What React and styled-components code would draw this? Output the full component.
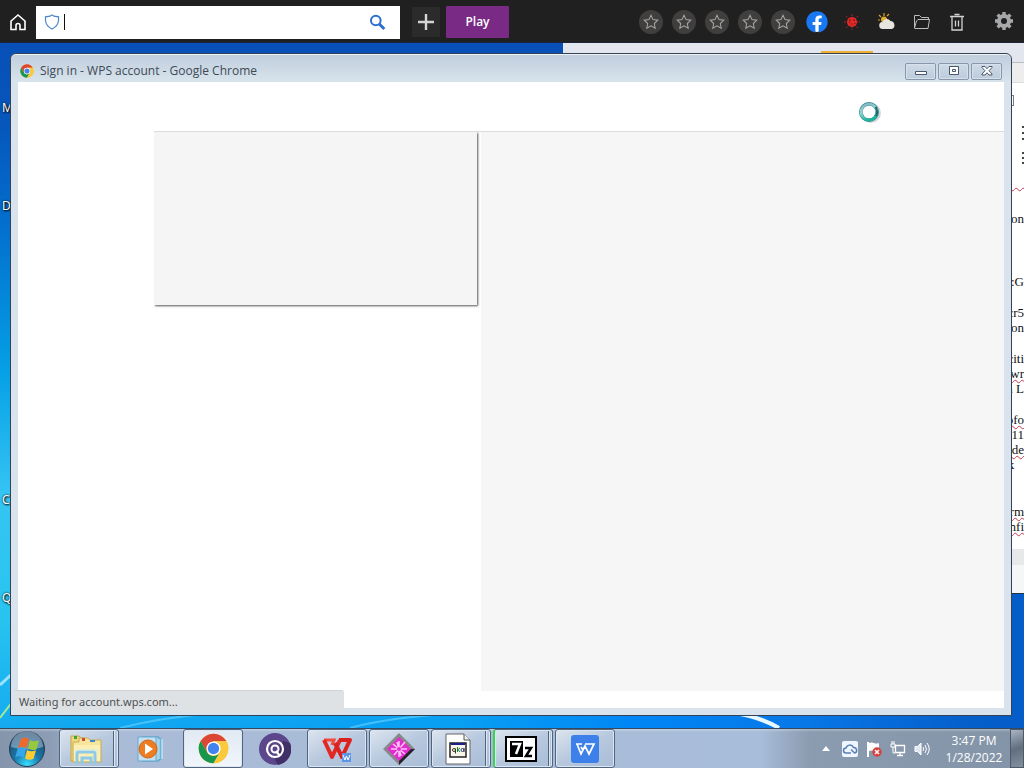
import React from 'react';
import styled, { createGlobalStyle, css } from 'styled-components';
import { FaFacebook } from 'react-icons/fa';

const ui = '"Noto Sans", "Open Sans", sans-serif';

const GlobalStyle = createGlobalStyle`
  *, *::before, *::after { box-sizing: border-box; }
  body { margin: 0; font-family: ${ui}; font-size: 12px; overflow: hidden; }
  button, input { font: inherit; padding: 0; border: 0; background: none; }
  svg { display: block; flex: none; }
  ul { list-style: none; margin: 0; padding: 0; }
`;

const Screen = styled.div`
  display: grid;
  grid-template-rows: 43px 1fr 40px;
  min-height: 100vh;
`;

/* ---------- Toolbar ---------- */
const Toolbar = styled.header`
  display: flex;
  align-items: center;
  background: #202020;
  border-bottom: 1px solid #19233a;
`;
const HomeButton = styled.button`
  display: grid;
  place-items: center;
  width: 36px;
  height: 33px;
  margin-top: 2px;
`;
const AddressBar = styled.form`
  display: flex;
  align-items: center;
  flex: 0 1 364px;
  height: 33px;
  margin-top: 2px;
  padding: 0 14px 0 8px;
  background: #fff;
`;
const AddressInput = styled.input`
  flex: 1;
  min-width: 0;
  height: 16px;
  margin-left: 4px;
  border-left: 1px solid #111;
  outline: none;
`;
const AddButton = styled.button`
  display: grid;
  place-items: center;
  width: 28px;
  height: 30px;
  margin: 2px 6px 0 12px;
  background: #2b2b2b;
`;
const PlayButton = styled.button`
  width: 63px;
  height: 32px;
  margin-top: 2px;
  border-radius: 1px;
  background: #782a85;
  color: #fff;
  font: 600 12px/16px "Open Sans", ${ui};
`;
const Shortcuts = styled.nav`
  display: flex;
  align-items: center;
  gap: 9px;
  margin: 2px 21px 0 auto;
`;
const StarButton = styled.button`
  display: grid;
  place-items: center;
  width: 24px;
  height: 24px;
  border-radius: 50%;
  background: #403f3e;
`;
const ToolButton = styled.button`
  display: grid;
  place-items: center;
  width: 26px;
  height: 26px;
  color: #1877f2;
`;
const SettingsButton = styled(ToolButton)`
  margin-right: 7px;
`;

/* ---------- Desktop ---------- */
const Desktop = styled.main`
  position: relative;
  overflow: hidden;
  background:
    linear-gradient(90deg, transparent 0%, rgba(0, 150, 245, 0.6) 45%, #0086f6 62%, #0878e8 78%, #0560cc 94%, #045cc8 100%) 0 100% / 100% 92% no-repeat,
    linear-gradient(180deg, #0850b8 0%, #0656bc 12%, #0372cf 28%, #05a0e6 48%, #35c5f3 66%, #28c4ef 84%, #14aaf0 100%);
`;
const Streaks = styled.svg`
  position: absolute;
  inset: 0;
  width: 100%;
  height: 100%;
`;
const ShortcutGrid = styled.ul`
  position: absolute;
  left: 2px;
  top: 0;
  width: 80px;
  color: #fff;
  text-shadow: 1px 1px 2px #000, 0 0 2px #000;
`;
const Shortcut = styled.li`
  display: flex;
  align-items: flex-end;
  height: 98px;
  line-height: 16px;
  &:first-child { height: 73px; }
`;

/* ---------- Document window ---------- */
const DocWindow = styled.section`
  position: absolute;
  top: 0;
  left: 55%;
  right: 0;
  bottom: 134px;
  display: flex;
  flex-direction: column;
  background: #fff;
  border-bottom: 1px solid #234;
  overflow: hidden;
`;
const DocTabs = styled.div`
  display: flex;
  height: 20px;
  flex: none;
  padding-right: 151px;
  border-bottom: 1px solid #b9bdc6;
  background: #e3e6ee;
`;
const DocTab = styled.span`
  width: 52px;
  height: 3px;
  margin: 8px 0 0 auto;
  background: #eeaf35;
`;
const DocRibbon = styled.div`
  height: 20px;
  flex: none;
  background: #ededed;
  border-bottom: 1px solid #dcdcdc;
`;
const DocTools = styled.div`
  display: flex;
  flex-direction: column;
  align-items: flex-end;
  height: 91px;
  flex: none;
  padding-top: 12px;
`;
const DocToggle = styled.span`
  width: 10px;
  height: 11px;
  margin-right: 10px;
  border: 1px solid #777c85;
`;
const DocDots = styled.svg`
  margin-top: 20px;
`;
const DocText = styled.div`
  flex: 1;
  width: 16px;
  margin-left: auto;
  min-height: 0;
  white-space: nowrap;
  color: #111;
  font: 13px/15px "Liberation Serif", serif;
`;
const Line = styled.p`
  display: flex;
  justify-content: flex-end;
  margin: 0;
  height: ${p => (p.$blank ? 16 : 15)}px;
  ${p => p.$wavy && css`text-decoration: underline wavy #c63b52 1px;`}
`;
const MarkedLine = styled(Line)`
  margin-bottom: 6px;
`;
const DocScroll = styled.div`
  height: 16px;
  flex: none;
  background: #e6e8e9;
`;
const DocStatus = styled.div`
  height: 28px;
  flex: none;
  background: #f5f6f7;
`;

/* ---------- Chrome window ---------- */
const Popup = styled.section`
  position: absolute;
  inset: 10px 12px 12px 10px;
  display: flex;
  flex-direction: column;
  padding: 0 7px;
  padding-bottom: 7px;
  border: 1px solid #344354;
  border-radius: 6px 6px 0 0;
  background: #d9e3ed;
  box-shadow: inset 0 1px 0 #eef3f8;
`;
const TitleBar = styled.header`
  display: flex;
  align-items: center;
  height: 27px;
  flex: none;
  margin: 1px -7px 0;
  padding: 5px 9px 0;
  border-radius: 5px 5px 0 0;
  background: linear-gradient(180deg, #c0cedd, #d8e4ec);
`;
const Title = styled.h1`
  flex: 1;
  margin: 0 0 0 6px;
  color: #3c4957;
  font: 400 12px/18px "Open Sans", ${ui};
`;
const Controls = styled.div`
  display: flex;
  gap: 2px;
`;
const ControlButton = styled.button`
  display: grid;
  place-items: center;
  width: 31px;
  height: 17px;
  border: 1px solid #8798ac;
  border-radius: 2px;
  background: linear-gradient(180deg, #cfdae6, #bccbdb);
  box-shadow: inset 0 0 0 1px #d6e1ec;
`;
const Page = styled.div`
  display: flex;
  flex: 1;
  flex-direction: column;
  background: #fff;
`;
const PageHeader = styled.div`
  height: 50px;
  flex: none;
  margin-left: 136px;
  border-bottom: 1px solid #dcdcdc;
`;
const PageBody = styled.div`
  display: flex;
  flex: 1;
  gap: 4px;
  padding: 0 0 17px 136px;
`;
const Card = styled.div`
  flex: 21 1 0;
  height: 173px;
  background: #f5f5f5;
  box-shadow: 1px 1px 2px #555;
  clip-path: inset(0 -4px -4px 0);
`;
const SidePanel = styled.div`
  flex: 34 1 0;
  background: #f6f6f6;
`;
const LoadStatus = styled.div`
  position: absolute;
  left: 4px;
  bottom: 2px;
  width: 329px;
  height: 23px;
  padding: 0 4px;
  border-top: 1px solid #cfd3d6;
  border-radius: 0 3px 0 0;
  background: #dfe2e4;
  color: #4c5055;
  font: 11px/22px ${ui};
`;
const BusyCursor = styled.svg`
  position: absolute;
  right: 128px;
  top: 46px;
`;

/* ---------- Taskbar ---------- */
const Taskbar = styled.footer`
  display: flex;
  align-items: center;
  border-top: 1px solid #34495f;
  background:
    linear-gradient(180deg, rgba(255, 255, 255, 0.3), transparent 3px),
    linear-gradient(90deg, #8595ab 0, #8c9db5 50px, #a9bbd6 110px, #a8bdd9 760px, #8b9bb0 810px, #8494a8 100%);
`;
const StartButton = styled.button`
  display: grid;
  place-items: center;
  width: 54px;
  height: 39px;
`;
const TaskList = styled.div`
  display: flex;
  gap: 2px;
  margin-left: 5px;
`;
const TaskButton = styled.button`
  display: grid;
  place-items: center;
  width: 60px;
  height: 39px;
  border-radius: 3px;
  ${p => p.$open && css`
    border: 1px solid #51657d;
    background: linear-gradient(150deg, #dde5ef, #b7c8de 50%, #a9bdd7);
    box-shadow: inset 0 0 0 1px #dbe6f2;
  `}
  ${p => p.$active && css`background: linear-gradient(180deg, #e1e9f2, #f1f6fb);`}
  ${p => p.$stacked && css`
    padding-right: 6px;
    background: linear-gradient(90deg, transparent 53px, #51657d 53px 54px, #dbe6f2 54px 55px, transparent 55px),
      linear-gradient(150deg, #dde5ef, #b7c8de 50%, #a9bdd7);
  `}
  ${p => p.$alert && css`border-left: 2px solid #36d84b;`}
`;
const Tray = styled.div`
  display: flex;
  align-items: center;
  gap: 8px;
  margin-left: auto;
`;
const TrayEnd = styled.div`
  display: flex;
  align-items: center;
`;
const Clock = styled.time`
  width: 72px;
  color: #fff;
  text-align: center;
  font: 12px/17px "Open Sans", ${ui};
`;
const TrayButton = styled.button`
  display: grid;
  place-items: center;
  width: 16px;
  height: 20px;
`;
const ShowDesktop = styled.button`
  width: 14px;
  height: 39px;
  border: 1px solid #4b5969;
  background: linear-gradient(160deg, #a9b5c2, #616e7e 50%, #8290a0);
`;

/* ---------- Drawings ---------- */
const starPath = 'M12 3l2.7 5.8 6.3.8-4.6 4.4 1.2 6.3L12 17.2l-5.6 3.1 1.2-6.3L3 9.6l6.3-.8z';

const ChromeLogo = ({ size }) => (
  <svg width={size} height={size} viewBox="0 0 48 48">
    <circle cx="24" cy="24" r="23" fill="#fbc93d" />
    <path d="M4.1 12.5A23 23 0 0 1 43.9 12.5H24L14 29.8z" fill="#dc4637" />
    <path d="M4.1 12.5A23 23 0 0 0 24 47l10-17.2a11.5 11.5 0 0 1-20 0z" fill="#17964f" />
    <path d="M43.9 12.5H24a11.5 11.5 0 0 1 10 17.3L24 47a23 23 0 0 0 19.9-34.5z" fill="#fbc93d" />
    <circle cx="24" cy="24" r="11" fill="#fff" />
    <circle cx="24" cy="24" r="8.8" fill="#4383ed" />
  </svg>
);

const StartOrb = () => (
  <svg width="38" height="38" viewBox="0 0 38 38">
    <defs>
      <radialGradient id="orb" cx="50%" cy="95%" r="85%">
        <stop offset="0" stopColor="#3be0ff" /><stop offset=".45" stopColor="#1779ab" /><stop offset="1" stopColor="#25496d" />
      </radialGradient>
    </defs>
    <circle cx="19" cy="19" r="17.5" fill="url(#orb)" stroke="#253a50" />
    <path d="M3 17a16 16 0 0 1 32 0q-16 5-32 0z" fill="#c5dae8" opacity=".45" />
    <path d="M13 9q4-3 8 .3l-2.500 9q-4-2.800-8.500-.4z" fill="#ee6a2c" />
    <path d="M22 10q4 2.500 9 .2l-2.500 9q-4 2-8.500-.6z" fill="#96c93d" />
    <path d="M9.500 19q4-2.500 8.500.2l-2.300 8.500q-4-2.700-8.500-.3z" fill="#37a6e8" />
    <path d="M19 20q4 2.500 9 .3l-2.500 8.500q-4 2.300-8.500-.4z" fill="#fecb34" />
  </svg>
);

const ExplorerIcon = () => (
  <svg width="34" height="32" viewBox="0 0 34 32">
    <path d="M2 3h8l2 2h4v23H2z" fill="#f0d77c" stroke="#c4a64c" />
    <path d="M10 5h9l2 2h11v22H4V9h6z" fill="#f6e59b" stroke="#c9ae56" />
    <path d="M5 12h26v16H5z" fill="#fbefb3" />
    <path d="M5 3h3v3H5z" fill="#36a845" /><path d="M13 5h3v3h-3z" fill="#d1483a" /><path d="M21 7h5v2h-5z" fill="#3e87ce" />
    <path d="M8 31V21q0-2 2-2h14q2 0 2 2v10M13 31v-6h9v6" fill="none" stroke="#8fc9e8" strokeWidth="3" />
    <path d="M6 20q0-3 3-3h17q3 0 3 3" fill="none" stroke="#c8e9f8" />
  </svg>
);

const MediaIcon = () => (
  <svg width="30" height="28" viewBox="0 0 30 28">
    <path d="M10 3h16v22H10z" fill="#6bb5d8" /><path d="M6 2h17v24H6z" fill="#a5d4ea" stroke="#4e9cc5" />
    <path d="M2 2h18v24H2z" fill="#c4e0f1" stroke="#67a9ce" />
    <path d="M23 4v20M26 4v20" stroke="#dff3fc" />
    <circle cx="12" cy="14" r="9" fill="#ee7d22" stroke="#cf6518" /><path d="M9 8.500l8 5.500-8 5.500z" fill="#fff" />
  </svg>
);

const ChatIcon = () => (
  <svg width="32" height="32" viewBox="0 0 32 32">
    <circle cx="16" cy="16" r="16" fill="#5c478c" />
    <path d="M24 8l7 2a16 16 0 0 1-12 22l-3-5z" fill="#413067" />
    <circle cx="16" cy="16" r="8" fill="none" stroke="#fff" strokeWidth="2.200" />
    <circle cx="16" cy="16" r="3.500" fill="none" stroke="#fff" strokeWidth="2" />
    <path d="M17 18l4 5" stroke="#fff" strokeWidth="2.200" />
  </svg>
);

const WriterIcon = () => (
  <svg width="32" height="28" viewBox="0 0 32 28">
    <path d="M3 5h10l-2 5" fill="none" stroke="#f2493c" strokeWidth="3" />
    <path d="M3 5l8 17 8-17" fill="none" stroke="#e32823" strokeWidth="4" strokeLinejoin="round" />
    <path d="M14 8l7 14 8-17H18" fill="none" stroke="#dd211f" strokeWidth="4" strokeLinejoin="round" />
    <path d="M21 18h9v9h-9z" fill="#5b95e8" /><path d="M22 20l2 5 1.500-4 1.500 4 2-5" fill="none" stroke="#fff" />
  </svg>
);

const DiamondIcon = () => (
  <svg width="32" height="32" viewBox="0 0 32 32">
    <path d="M16 0l16 16-16 16L0 16z" fill="#888" />
    <path d="M32 16L16 32v-5l11-11z" fill="#25222b" />
    <path d="M16 4l12 12-12 12L4 16z" fill="#e32bd2" />
    <path d="M16 8v16M8 16h16M10 11l12 10M11 22l11-13M14 9l4 14" stroke="#ffc5f7" strokeWidth="1.500" />
    <circle cx="16" cy="16" r="2" fill="#e32bd2" />
  </svg>
);

const ScriptIcon = () => (
  <svg width="26" height="32" viewBox="0 0 26 32">
    <path d="M1 1h18l6 6v24H1z" fill="#fff" stroke="#666" /><path d="M19 1v6h6" fill="#eee" stroke="#555" />
    <path d="M5 10h16v14H5z" fill="#f8f5e8" stroke="#222" strokeWidth="1.500" /><path d="M6 10h14v2H6z" fill="#1d2088" />
    <circle cx="9" cy="17" r="1.500" fill="none" stroke="#4b3920" />
    <path d="M12.500 14v5M12.500 17l2.500-2M13 16.500l2 2.500" stroke="#148026" /><circle cx="17.500" cy="17" r="1.500" fill="none" stroke="#253b9b" />
    <path d="M10.500 15.500v5M19 15v4" stroke="#333" />
  </svg>
);

const ArchiveIcon = () => (
  <svg width="32" height="26" viewBox="0 0 32 26">
    <path d="M1 1h30v24H1z" fill="#fff" stroke="#000" strokeWidth="2" /><path d="M5 5h13v16H5z" />
    <path d="M7 8h8l-4 10" fill="none" stroke="#fff" strokeWidth="2.500" />
    <path d="M20 12h6l-5 8h6" fill="none" stroke="#000" strokeWidth="2.500" />
  </svg>
);

const OfficeIcon = () => (
  <svg width="28" height="28" viewBox="0 0 28 28">
    <rect width="28" height="28" rx="3" fill="#3d80e9" />
    <path d="M5 9h6M6 9l4 10 4-8 4 8 5-10h-9M10 12l2 3" fill="none" stroke="#fff" strokeWidth="1.700" />
  </svg>
);

const tasks = [
  { name: 'File Explorer', Icon: ExplorerIcon, open: true, stacked: true },
  { name: 'Media Player', Icon: MediaIcon },
  { name: 'Google Chrome', Icon: () => <ChromeLogo size={31} />, open: true, active: true },
  { name: 'Chat', Icon: ChatIcon },
  { name: 'Writer', Icon: WriterIcon, open: true },
  { name: 'Tools', Icon: DiamondIcon, open: true },
  { name: 'Script', Icon: ScriptIcon, open: true, stacked: true },
  { name: '7-Zip', Icon: ArchiveIcon, open: true, stacked: true, alert: true },
  { name: 'WPS Office', Icon: OfficeIcon, open: true },
];

const shortcuts = ['M', 'D', '', '', 'C', 'Q'];

const lines = [
  ['on'], null, null, null, [':G'], null, ['cr5'], ['on'], null,
  ['citi'], ['wr', true], ['n L'], null, ['ofo', true], ['11'], ['de', true], ['k\u00a0\u00a0\u00a0'],
  null, null, ['rm', true], ['nfi', true],
];

export default function App() {
  return (
    <Screen>
      <GlobalStyle />
      <Toolbar>
        <HomeButton aria-label="Home">
          <svg width="18" height="18" viewBox="0 0 18 18" fill="none" stroke="#fff" strokeWidth="1.600">
            <path d="M1.500 8.500L9 2l7.500 6.500M2 8v8.500h5v-4a2 2 0 0 1 4 0v4h5V8" />
          </svg>
        </HomeButton>
        <AddressBar onSubmit={e => e.preventDefault()}>
          <svg width="16" height="16" viewBox="0 0 16 16" fill="none" stroke="#4a86c8" strokeWidth="1.200">
            <path d="M8 1l2 1.200 4.500.6v4Q14 12 8 15 2 12 1.500 6.800v-4L6 2.200z" />
          </svg>
          <AddressInput aria-label="Address" />
          <svg width="17" height="17" viewBox="0 0 17 17" fill="none" stroke="#2c70cf" strokeWidth="2">
            <circle cx="6.800" cy="6.500" r="4.800" /><path d="M10.300 10l5 5" strokeWidth="3" />
          </svg>
        </AddressBar>
        <AddButton aria-label="New tab">
          <svg width="16" height="16" viewBox="0 0 16 16" stroke="#d4d4d4" strokeWidth="2.400"><path d="M8 0v16M0 8h16" /></svg>
        </AddButton>
        <PlayButton>Play</PlayButton>
        <Shortcuts aria-label="Shortcuts">
          {[1, 2, 3, 4, 5].map(n => (
            <StarButton key={n} aria-label={`Favourite ${n}`}>
              <svg width="18" height="18" viewBox="0 0 24 24" fill="none" stroke="#a5a5a5" strokeWidth="1.400"><path d={starPath} /></svg>
            </StarButton>
          ))}
          <ToolButton aria-label="Facebook">
            <svg width="22" height="22" viewBox="0 0 22 22"><circle cx="11" cy="11" r="10" fill="#fff" /><FaFacebook size={22} /></svg>
          </ToolButton>
          <ToolButton aria-label="Virus news">
            <svg width="18" height="18" viewBox="0 0 18 18">
              <path d="M9 1v16M1 9h16M3 3l12 12M15 3L3 15" stroke="#a92622" strokeDasharray="2 1" />
              <circle cx="9" cy="9" r="5" fill="#df2929" />
              <path d="M7 6v2M11 6v2M8 11h1M12 10v1M6 9h1" stroke="#651212" />
            </svg>
          </ToolButton>
          <ToolButton aria-label="Weather">
            <svg width="18" height="18" viewBox="0 0 18 18">
              <path d="M6 0v3M1 2l2 2M11 1L9 3M0 7h2" stroke="#d5a52c" strokeWidth="1.200" />
              <circle cx="6" cy="6.500" r="3" fill="#e0ad2b" />
              <path d="M5 16a3.500 3.500 0 0 1-.5-7 4.500 4.500 0 0 1 8-1 4.200 4.200 0 0 1 1.500 8z" fill="#e7e5dd" />
            </svg>
          </ToolButton>
          <ToolButton aria-label="Folder">
            <svg width="18" height="16" viewBox="0 0 18 16" fill="none" stroke="#bcbcbc">
              <path d="M1.500 14V1.500h5l2 2h7v2M1.500 14.500H15l1.500-9H5L3.500 7 1.500 14" />
            </svg>
          </ToolButton>
          <ToolButton aria-label="Trash">
            <svg width="16" height="18" viewBox="0 0 16 18" fill="none" stroke="#d2d2d2" strokeWidth="1.300">
              <path d="M1 3.500h14M5.500 1.500h5M3 4v13h10V4M6.500 7.500v6M9.500 7.500v6" />
            </svg>
          </ToolButton>
        </Shortcuts>
        <SettingsButton aria-label="Settings">
          <svg width="20" height="20" viewBox="0 0 20 20" fill="none" stroke="#a7a8aa">
            <circle cx="10" cy="10" r="5" strokeWidth="4" />
            <path d="M10 1v3M10 16v3M1 10h3M16 10h3M3.600 3.600l2.200 2.200M14.200 14.200l2.200 2.200M16.400 3.600l-2.200 2.200M5.800 14.200l-2.200 2.200" strokeWidth="3.400" />
          </svg>
        </SettingsButton>
      </Toolbar>

      <Desktop>
        <Streaks viewBox="0 0 1024 685" preserveAspectRatio="none" fill="none" aria-hidden="true">
          <path d="M0 642L13 630" stroke="#9ce3ff" strokeWidth="3" />
          <path d="M0 675L13 658" stroke="#9deb9b" strokeWidth="2" />
          <path d="M120 685Q160 675 205 671M350 685Q390 674 450 671" stroke="#6bd3ff" strokeWidth="2" opacity=".6" />
          <path d="M735 670Q760 674 779 685" stroke="#e8f8ff" strokeWidth="4" />
        </Streaks>
        <ShortcutGrid>
          {shortcuts.map((label, i) => <Shortcut key={i}>{label}</Shortcut>)}
        </ShortcutGrid>

        <DocWindow>
          <DocTabs><DocTab /></DocTabs>
          <DocRibbon />
          <DocTools>
            <DocToggle />
            <DocDots width="2" height="40" viewBox="0 0 2 40" stroke="#444" strokeWidth="2">
              <path d="M1 0v2M1 6v2M1 12v2M1 26v2M1 31v2M1 36v2" />
            </DocDots>
          </DocTools>
          <DocText>
            <MarkedLine $wavy>&nbsp;&nbsp;&nbsp;&nbsp;</MarkedLine>
            <Line $blank />
            {lines.map((line, i) => line
              ? <Line key={i} $wavy={line[1]}>{line[0]}</Line>
              : <Line key={i} $blank />)}
          </DocText>
          <DocScroll />
          <DocStatus />
        </DocWindow>

        <Popup>
          <TitleBar>
            <ChromeLogo size={14} />
            <Title>Sign in - WPS account - Google Chrome</Title>
            <Controls>
              <ControlButton aria-label="Minimize">
                <svg width="12" height="10" viewBox="0 0 12 10" fill="#fff" stroke="#48566b"><path d="M.5 5.500h11v3H.5z" /></svg>
              </ControlButton>
              <ControlButton aria-label="Maximize">
                <svg width="12" height="10" viewBox="0 0 12 10" fill="#fff" stroke="#48566b"><path d="M1.500.5h9v8h-9zM4.500 3.500h3v2h-3z" /></svg>
              </ControlButton>
              <ControlButton aria-label="Close">
                <svg width="12" height="10" viewBox="0 0 12 10" fill="#fff" stroke="#48566b">
                  <path d="M1 .5h3l2 2.200L8 .5h3v1L8 4.700l3 3.300v1H8L6 6.800 4 9H1V8l3-3.300L1 1.500z" />
                </svg>
              </ControlButton>
            </Controls>
          </TitleBar>
          <Page>
            <PageHeader />
            <PageBody><Card /><SidePanel /></PageBody>
          </Page>
          <LoadStatus role="status">Waiting for account.wps.com...</LoadStatus>
          <BusyCursor width="26" height="24" viewBox="0 0 26 24" fill="none" aria-hidden="true">
            <defs>
              <linearGradient id="ring" x1="0" y1="0" x2=".4" y2="1">
                <stop offset="0" stopColor="#8cb0be" /><stop offset=".5" stopColor="#8fd7d6" /><stop offset="1" stopColor="#18b79d" />
              </linearGradient>
            </defs>
            <circle cx="14" cy="13" r="8.500" stroke="#999" strokeWidth="3" opacity=".4" />
            <circle cx="12" cy="12" r="8" stroke="#2e8d94" strokeWidth="4" />
            <circle cx="12" cy="12" r="8" stroke="url(#ring)" strokeWidth="2.600" />
            <path d="M18.500 7q3 5 .5 9" stroke="#25666d" strokeWidth="2" />
            <circle cx="12" cy="12" r="6.300" fill="#fff" />
          </BusyCursor>
        </Popup>
      </Desktop>

      <Taskbar>
        <StartButton aria-label="Start"><StartOrb /></StartButton>
        <TaskList>
          {tasks.map(({ name, Icon, open, active, stacked, alert }) => (
            <TaskButton key={name} aria-label={name} $open={open} $active={active} $stacked={stacked} $alert={alert}><Icon /></TaskButton>
          ))}
        </TaskList>
        <Tray>
          <TrayButton aria-label="Show hidden icons">
            <svg width="8" height="5" viewBox="0 0 8 5"><path d="M0 5l4-5 4 5z" fill="#fff" /></svg>
          </TrayButton>
          <TrayButton aria-label="Cloud">
            <svg width="16" height="16" viewBox="0 0 16 16">
              <rect width="16" height="16" rx="2" fill="#eff6ff" />
              <path d="M9 12H4a2.500 2.500 0 0 1 0-5 4 4 0 0 1 7.500-.5A2.800 2.800 0 0 1 12.500 12L9 8.500" fill="none" stroke="#587fb4" strokeWidth="1.500" />
            </svg>
          </TrayButton>
          <TrayButton aria-label="Action center">
            <svg width="16" height="16" viewBox="0 0 16 16">
              <path d="M2 1v15" stroke="#fff" strokeWidth="2" /><path d="M3 2q3-1 5 0t5 0v8q-3 1-5 0t-5 0z" fill="#fff" />
              <circle cx="11" cy="11" r="4.700" fill="#d6413e" /><path d="M9 9l4 4M13 9l-4 4" stroke="#fff" strokeWidth="1.500" />
            </svg>
          </TrayButton>
          <TrayButton aria-label="Network">
            <svg width="16" height="16" viewBox="0 0 16 16" fill="none" stroke="#fff">
              <path d="M5.500 4.500h9v7h-9zM10 12v2M7 14.500h6" strokeWidth="1.300" /><path d="M1 3h4v3H1zM2 0v3M4 0v3M3 6v6h2" />
            </svg>
          </TrayButton>
          <TrayButton aria-label="Volume">
            <svg width="16" height="16" viewBox="0 0 16 16" fill="none" stroke="#fff">
              <path d="M1 5.500h2.500L7 2v12l-3.500-3.500H1z" fill="#dfe7f0" /><path d="M9 6q1.500 2 0 4M11 4q3 4 0 8M13 2q4.500 6 0 12" />
            </svg>
          </TrayButton>
          <TrayEnd>
            <Clock>3:47 PM<br />1/28/2022</Clock>
            <ShowDesktop aria-label="Show desktop" />
          </TrayEnd>
        </Tray>
      </Taskbar>
    </Screen>
  );
}
